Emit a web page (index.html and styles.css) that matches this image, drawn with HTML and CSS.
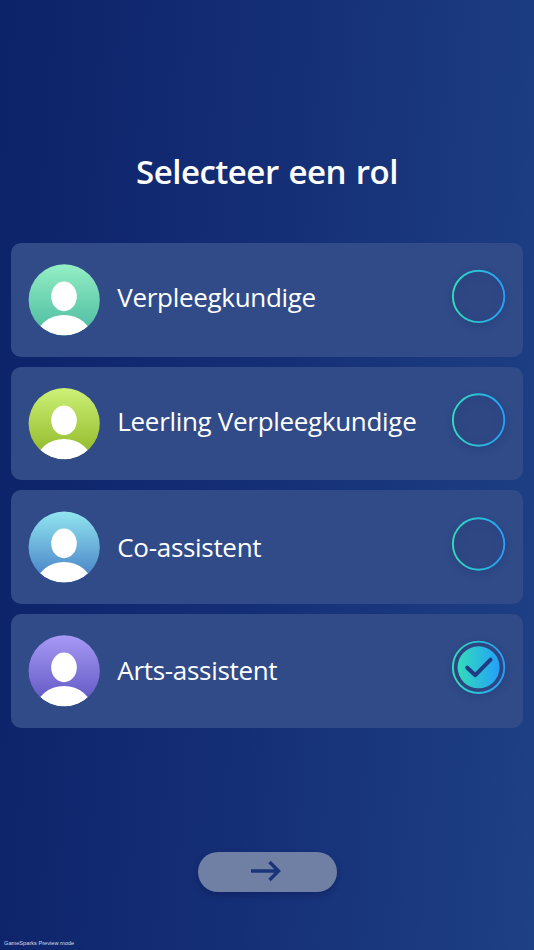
FILE: index.html
```html
<!DOCTYPE html>
<html lang="nl">
<head>
<meta charset="utf-8">
<title>Selecteer een rol</title>
<link rel="stylesheet" href="styles.css">
</head>
<body>
<svg class="defs" aria-hidden="true">
  <defs>
    <linearGradient id="ring" x1="0" y1="0" x2="1" y2="0"><stop offset="0" stop-color="#32dcb9"/><stop offset="1" stop-color="#249ffa"/></linearGradient>
    <clipPath id="disc"><circle cx="36" cy="36" r="35.6"/></clipPath>
    <symbol id="person" viewBox="0 0 72 72">
      <ellipse cx="36" cy="32.4" rx="12.8" ry="14.8"/>
      <ellipse cx="36" cy="75" rx="28" ry="24" clip-path="url(#disc)"/>
    </symbol>
  </defs>
</svg>
<main class="screen">
  <h1 class="title">Selecteer een rol</h1>
  <div class="roles">
    <div class="role">
      <div class="avatar green"><svg viewBox="0 0 72 72"><use href="#person"/></svg></div>
      <span class="name raised">Verpleegkundige</span>
      <svg class="radio" viewBox="0 0 54 54"><circle class="ring" cx="26.6" cy="27.4" r="25.7"/></svg>
    </div>
    <div class="role">
      <div class="avatar lime"><svg viewBox="0 0 72 72"><use href="#person"/></svg></div>
      <span class="name raised">Leerling Verpleegkundige</span>
      <svg class="radio" viewBox="0 0 54 54"><circle class="ring" cx="26.6" cy="27" r="25.7"/></svg>
    </div>
    <div class="role">
      <div class="avatar blue"><svg viewBox="0 0 72 72"><use href="#person"/></svg></div>
      <span class="name">Co-assistent</span>
      <svg class="radio" viewBox="0 0 54 54"><circle class="ring" cx="26.6" cy="27" r="25.7"/></svg>
    </div>
    <div class="role">
      <div class="avatar purple"><svg viewBox="0 0 72 72"><use href="#person"/></svg></div>
      <span class="name">Arts-assistent</span>
      <svg class="radio" viewBox="0 0 54 54"><circle class="ring" cx="26.6" cy="27.3" r="25.7"/><circle class="fill" cx="26.6" cy="27.3" r="21"/><path class="check" d="M15.3 27.7l8 7.5L38.6 19.7"/></svg>
    </div>
  </div>
  <button class="next" aria-label="Volgende"><svg viewBox="0 0 32 22"><path d="M1 11h27M19.5 2l9 9-9 9"/></svg></button>
  <footer class="note">GameSparks Preview mode</footer>
</main>
</body>
</html>
```
FILE: styles.css
```css
* { box-sizing: border-box; }
body { margin: 0; }
.defs { display: block; width: 0; height: 0; }
.screen {
  height: 950px;
  padding: 0 11px;
  display: flex;
  flex-direction: column;
  color: #fff;
  font-family: "Open Sans", sans-serif;
  background: linear-gradient(94deg, #0c2269 0%, #152f76 50%, #1e4085 100%);
  overflow: hidden;
}
.title {
  margin: 142px 0 0;
  height: 60px;
  line-height: 60px;
  font-size: 33px;
  font-weight: 600;
  letter-spacing: -.5px;
  word-spacing: 1.8px;
  text-align: center;
  white-space: nowrap;
}
.roles {
  margin-top: 41px;
  display: grid;
  gap: 10px;
}
.role {
  height: 113.7px;
  padding: 0 17px;
  display: flex;
  align-items: center;
  border-radius: 10px;
  background: #304b88;
}
.avatar {
  display: flex;
  width: 72px;
  height: 72px;
  flex: none;
}
.avatar svg { width: 72px; height: 72px; fill: #fff; }
.green { background: linear-gradient(#94efc5, #49b99f); }
.lime { background: linear-gradient(#ccf176, #8eb525); }
.blue { background: linear-gradient(#92e6f0, #437bc4); }
.purple { background: linear-gradient(#a89af5, #5b53bf); }
.green, .lime, .blue, .purple { clip-path: circle(35.6px at 36.2px 36px); }
.name {
  flex: 1;
  margin-left: 17.3px;
  padding-bottom: 1px;
  font-size: 26px;
  letter-spacing: -.31px;
  line-height: 36px;
  white-space: nowrap;
}
.raised { padding: 0 0 6px; }
.radio {
  width: 54px;
  height: 54px;
  margin: 0 .4px 7px 0;
  flex: none;
  overflow: visible;
  border-radius: 50%;
  background: radial-gradient(circle at 50% 55%, #2f4884 30%, #2c4481 70%);
  box-shadow: 0 3px 7px rgba(24, 45, 105, .28);
}
.ring { fill: none; stroke: url(#ring); stroke-width: 1.9; }
.fill { fill: url(#ring); }
.check { fill: none; stroke: #1e3a82; stroke-width: 4; stroke-linecap: round; stroke-linejoin: round; }
.next {
  width: 139px;
  height: 40px;
  margin: 124.5px auto 0;
  padding: 0 2px 2px 0;
  border: 0;
  border-radius: 20px;
  display: flex;
  align-items: center;
  justify-content: center;
  background: #7080a4;
  box-shadow: 0 3px 6px rgba(5, 20, 75, .35);
}
.next svg { width: 32px; height: 22px; fill: none; stroke: #1a3479; stroke-width: 3.5; }
.note {
  margin: auto 0 2px -7px;
  font: 5.65px/9px "Liberation Sans", sans-serif;
  color: #d5daea;
}
```
